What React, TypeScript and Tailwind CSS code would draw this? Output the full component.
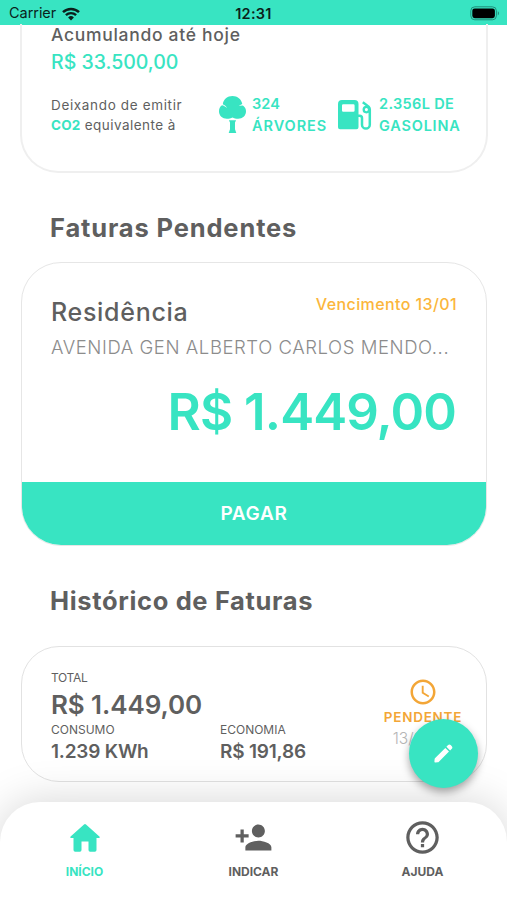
import React from "react";
import { MdAccessTime, MdHelpOutline, MdPersonAdd } from "react-icons/md";

function WifiIcon() {
  return (
    <svg viewBox="0 0 18 14" className="w-[18px] h-[14px]" fill="none" stroke="#0b1f1b">
      <path d="M1 5.2a11.6 11.6 0 0 1 16 0" strokeWidth="2.5" />
      <path d="M3.9 8.2a7.4 7.4 0 0 1 10.2 0" strokeWidth="2.4" />
      <path d="M9 13.4 6.1 10.5a4.2 4.2 0 0 1 5.8 0Z" fill="#0b1f1b" stroke="none" />
    </svg>
  );
}

function BatteryIcon() {
  return (
    <svg viewBox="0 0 30 15" className="w-[30px] h-[15px]">
      <rect x="0.8" y="0.8" width="25.6" height="13" rx="4" fill="none" stroke="#1f8f7a" strokeWidth="1" />
      <rect x="2.3" y="2.4" width="22.6" height="9.8" rx="2.4" fill="#000" />
      <path d="M27.8 5.2c1.6.7 1.6 3.5 0 4.2Z" fill="#1f8f7a" />
    </svg>
  );
}

function TreeIcon() {
  return (
    <svg viewBox="0 0 27 37" className="w-[27px] h-[37px]" fill="#38e4c2">
      <path d="M13.500 0c5 0 8.800 3.200 9.800 8l-3.600 1.700 4.200-.2c2 1.500 3.100 3.300 3.100 5.700 0 4.600-3.600 7.500-7.800 7.500-2.300 0-4.200-.4-5.700-1.300-1.500.9-3.400 1.300-5.700 1.300-4.200 0-7.800-2.900-7.800-7.500 0-2.700 1-4.600 3-5.900 1.600.3 3.400 1.200 5 2.600-.8-1.700-2.300-3-4.200-3.700C4.200 3.500 8.500 0 13.500 0Z" />
      <path d="M9.900 24.300h7.200l-1.100 2.100v6.900l1.300 3.700H9.700l1.300-3.700v-6.900Z" />
    </svg>
  );
}

function GasIcon() {
  return (
    <svg viewBox="0 0 34 30" className="w-[34px] h-[30px]">
      <path
        fillRule="evenodd"
        fill="#38e4c2"
        d="M4 0h12.500a4 4 0 0 1 4 4v23.300a2 2 0 0 1-2 2H2a2 2 0 0 1-2-2V4a4 4 0 0 1 4-4Zm1.200 4.300a1.200 1.200 0 0 0-1.200 1.200v5a1.200 1.200 0 0 0 1.200 1.200h10.200a1.200 1.200 0 0 0 1.200-1.200v-5a1.200 1.200 0 0 0-1.200-1.200Z"
      />
      <path
        d="M20 15.700h1.500a2.500 2.500 0 0 1 2.500 2.500v6.500a3.900 3.900 0 0 0 7.800 0V9.500c0-1.300-.4-2.100-1.200-2.900l-5.800-4.400"
        fill="none"
        stroke="#38e4c2"
        strokeWidth="2.500"
      />
      <circle cx="28.400" cy="9.600" r="2.700" fill="none" stroke="#38e4c2" strokeWidth="2.300" />
    </svg>
  );
}

function HomeIcon() {
  return (
    <svg viewBox="0 0 30 28" className="w-[30px] h-[28px]" fill="#38e4c2">
      <path d="M14 .5a1.500 1.500 0 0 1 2 0l13.400 12c.8.800.4 1.500-.5 1.500h-2.400v12a1.700 1.700 0 0 1-1.700 1.700h-4.700a1.600 1.600 0 0 1-1.600-1.600V17.500h-7v8.600a1.600 1.600 0 0 1-1.600 1.600H5.200A1.700 1.700 0 0 1 3.500 26V14H1.100c-.9 0-1.300-.7-.5-1.500Z" />
    </svg>
  );
}

function PencilIcon() {
  return (
    <svg viewBox="0 0 19 19" className="w-[19px] h-[19px]" fill="#fff">
      <path d="M11.300 3.900 15 7.600 4.900 17.700c-.3.300-.7.500-1.200.6l-2.500.3c-.5.100-.8-.3-.8-.8l.2-2.500c.1-.5.200-.9.600-1.200Z" />
      <path d="m12.400 2.800 1.700-1.700c.8-.8 1.800-.8 2.600 0l1.100 1.100c.8.800.8 1.800 0 2.600l-1.700 1.700Z" />
    </svg>
  );
}

const tabs = [
  { label: "INÍCIO", icon: <HomeIcon />, active: true },
  { label: "INDICAR", icon: <MdPersonAdd className="w-[39px] h-[39px]" />, active: false },
  { label: "AJUDA", icon: <MdHelpOutline className="w-[39px] h-[39px]" />, active: false },
];

function StatusBar() {
  return (
    <header className="h-[25px] shrink-0 bg-[#38e4c2] grid grid-cols-3 items-center pl-[9px] pr-[7px] text-[#0b1f1b] leading-none">
      <div className="flex items-center gap-[6px] pt-[2px]">
        <span className="text-[14.5px] tracking-[-0.05px]">Carrier</span>
        <WifiIcon />
      </div>
      <span className="pt-[3px] pr-[2px] text-center text-[14.5px] font-semibold tracking-[0.3px]">12:31</span>
      <div className="flex justify-end pt-[1px]">
        <BatteryIcon />
      </div>
    </header>
  );
}

function SavingsCard() {
  return (
    <section className="h-[149px] ml-[20px] mr-[19px] -mt-px pl-[29px] pr-[20px] border-2 border-t-0 border-[#efefef] rounded-b-[38px]">
      <p className="h-[20px] pt-px leading-[20px] text-[17.5px] font-medium tracking-[0.7px]">Acumulando até hoje</p>
      <p className="mt-[5px] h-[26px] leading-[27px] text-[19.5px] font-medium text-[#38e4c2]">R$ 33.500,00</p>
      <div className="flex mt-[19px] whitespace-nowrap">
        <p className="w-[168px] shrink-0 pt-px leading-[20px] text-[13.5px] tracking-[0.65px]">
          Deixando de emitir
          <br />
          <b className="font-bold text-[#38e4c2] tracking-[0.2px]">CO2</b>
          <span className="tracking-[0.45px]"> equivalente à</span>
        </p>
        <div className="w-[119px] shrink-0 flex text-[#38e4c2] text-[14.5px] leading-[22px] font-semibold">
          <div className="w-[33px] shrink-0 pt-[2px]">
            <TreeIcon />
          </div>
          <p className="-mt-px tracking-[0.95px]">
            <span className="tracking-[0.1px]">324</span>
            <br />
            ÁRVORES
          </p>
        </div>
        <div className="flex shrink-0 text-[#38e4c2] text-[14.5px] leading-[22px] font-semibold">
          <div className="w-[41px] shrink-0 pt-[6px]">
            <GasIcon />
          </div>
          <p className="-mt-px tracking-[0.8px]">
            <span className="tracking-[0.35px]">2.356L DE</span>
            <br />
            GASOLINA
          </p>
        </div>
      </div>
    </section>
  );
}

function PendingBill() {
  return (
    <section className="h-[284px] ml-[21px] mr-[20px] flex flex-col border border-[#e6e6e6] rounded-[40px] overflow-hidden">
      <div className="h-[220px] pl-[29px] pr-[29px] pt-[31px] whitespace-nowrap">
        <div className="flex justify-between">
          <h3 className="h-[36px] leading-[37px] text-[25px] font-medium tracking-[0.7px]">Residência</h3>
          <span className="leading-[20px] text-[16px] font-medium tracking-[0.4px] text-[#fbb63c]">Vencimento 13/01</span>
        </div>
        <p className="h-[34px] leading-[34px] text-[18.5px] font-light tracking-[0.57px] text-[#8c8c8c]">
          AVENIDA GEN ALBERTO CARLOS MENDO...
        </p>
        <p className="mt-[16px] mr-px h-[64px] leading-[64px] text-right text-[51px] font-semibold tracking-[-0.9px] text-[#38e4c2]">
          R$ 1.449,00
        </p>
      </div>
      <button className="h-[63px] pt-px bg-[#38e4c2] text-white text-[19px] font-semibold tracking-[0.7px]">PAGAR</button>
    </section>
  );
}

function HistoryCard() {
  return (
    <section className="h-[136px] ml-[21px] mr-[20px] pl-[29px] pr-[24px] pt-[22px] flex border border-[#e2e2e2] rounded-[38px] whitespace-nowrap">
      <div className="w-[333px]">
        <p className="h-[18px] leading-[18px] text-[12px] tracking-[-0.3px]">TOTAL</p>
        <p className="h-[34px] leading-[35px] text-[26px] font-semibold tracking-[-0.1px]">R$ 1.449,00</p>
        <div className="flex">
          <div className="w-[169px]">
            <p className="h-[17px] leading-[17px] text-[12px]">CONSUMO</p>
            <p className="h-[26px] leading-[27px] text-[19px] font-semibold tracking-[-0.2px]">1.239 KWh</p>
          </div>
          <div>
            <p className="h-[17px] leading-[17px] text-[12px]">ECONOMIA</p>
            <p className="h-[26px] leading-[27px] text-[19px] font-semibold tracking-[-0.2px]">R$ 191,86</p>
          </div>
        </div>
      </div>
      <div className="w-[78px] pt-[8px] flex flex-col items-center">
        <MdAccessTime className="w-[30px] h-[30px] text-[#f3a637]" />
        <p className="h-[20px] leading-[20px] text-[13.5px] font-semibold tracking-[0.75px] text-[#f3a637]">PENDENTE</p>
        <p className="mt-px mr-[3px] h-[22px] leading-[22px] text-[15.5px] font-light text-[#b5b5b5]">13/01/21</p>
      </div>
    </section>
  );
}

export default function App() {
  return (
    <div className="relative w-[507px] h-[900px] flex flex-col overflow-hidden bg-white text-[#5f5f5f] font-['Inter','Liberation_Sans',sans-serif]">
      <StatusBar />
      <main className="flex-1 min-h-0">
        <SavingsCard />
        <h2 className="h-[89px] pt-[11px] pl-[50px] leading-[88px] text-[25.5px] font-bold tracking-[0.85px]">Faturas Pendentes</h2>
        <PendingBill />
        <h2 className="h-[100px] pl-[50px] leading-[110px] text-[25.5px] font-bold tracking-[0.65px]">Histórico de Faturas</h2>
        <HistoryCard />
      </main>
      <nav className="h-[98px] shrink-0 grid grid-cols-3 bg-white rounded-t-[40px] shadow-[0_0_44px_0_rgba(0,0,0,0.17)]">
        {tabs.map((tab) => (
          <a
            key={tab.label}
            className={tab.active ? "flex flex-col items-center text-[#38e4c2]" : "flex flex-col items-center text-[#5f5f5f]"}
          >
            <span className="mt-[15px] h-[41px] flex items-center">{tab.icon}</span>
            <span className="mt-[6px] leading-[16px] text-[12px] font-bold">{tab.label}</span>
          </a>
        ))}
      </nav>
      <button className="absolute left-[409px] top-[719px] w-[69px] h-[69px] flex items-center justify-center rounded-full bg-[#38e4c2] shadow-[0_4px_8px_rgba(0,0,0,0.35)]">
        <PencilIcon />
      </button>
    </div>
  );
}
